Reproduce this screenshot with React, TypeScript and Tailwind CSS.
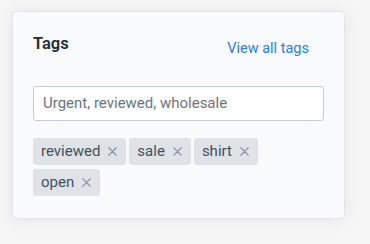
import React from "react";

const tags = ["reviewed", "sale", "shirt", "open"];

function XIcon() {
  return (
    <svg width="9" height="9" viewBox="0 0 9 9" className="shrink-0">
      <path d="M0.75 0.75 L8.25 8.25 M8.25 0.75 L0.75 8.25" stroke="#8a939c" strokeWidth="1.1" strokeLinecap="round" />
    </svg>
  );
}

export default function App() {
  return (
    <div className="w-[370px] h-[244px] bg-[#f6f6f7] pt-[11px] pl-[12px]" style={{ fontFamily: "Roboto, 'Noto Sans', sans-serif" }}>
      <div className="w-[333px] bg-[#f9fafb] border border-[#e3e5e7] rounded-[4px] shadow-[0_1px_18px_rgba(0,0,0,0.08)] pl-[20px] pr-[20px] pt-[20px] pb-[22px]">
        <div className="flex items-start justify-between">
          <div className="text-[16.5px] leading-[24px] font-semibold text-[#212b36]">Tags</div>
          <a className="mt-[7px] mr-[15px] text-[14.5px] leading-[20px] text-[#2c7ed6]">View all tags</a>
        </div>
        <div className="mt-[27px] h-[35px] w-[291px] bg-white border border-[#c4cdd5] rounded-[3px] flex items-center pl-[9px]">
          <span className="text-[15px] text-[#6b7480]">Urgent, reviewed, wholesale</span>
        </div>
        <div className="mt-[17px] flex flex-wrap gap-x-[3px] gap-y-[4px]">
          {tags.map((t) => (
            <div key={t} className="h-[27px] flex items-center gap-[8px] bg-[#dfe3e8] rounded-[3px] pl-[8px] pr-[9px]">
              <span className="text-[15px] text-[#454f5b]">{t}</span>
              <XIcon />
            </div>
          ))}
        </div>
      </div>
    </div>
  );
}
